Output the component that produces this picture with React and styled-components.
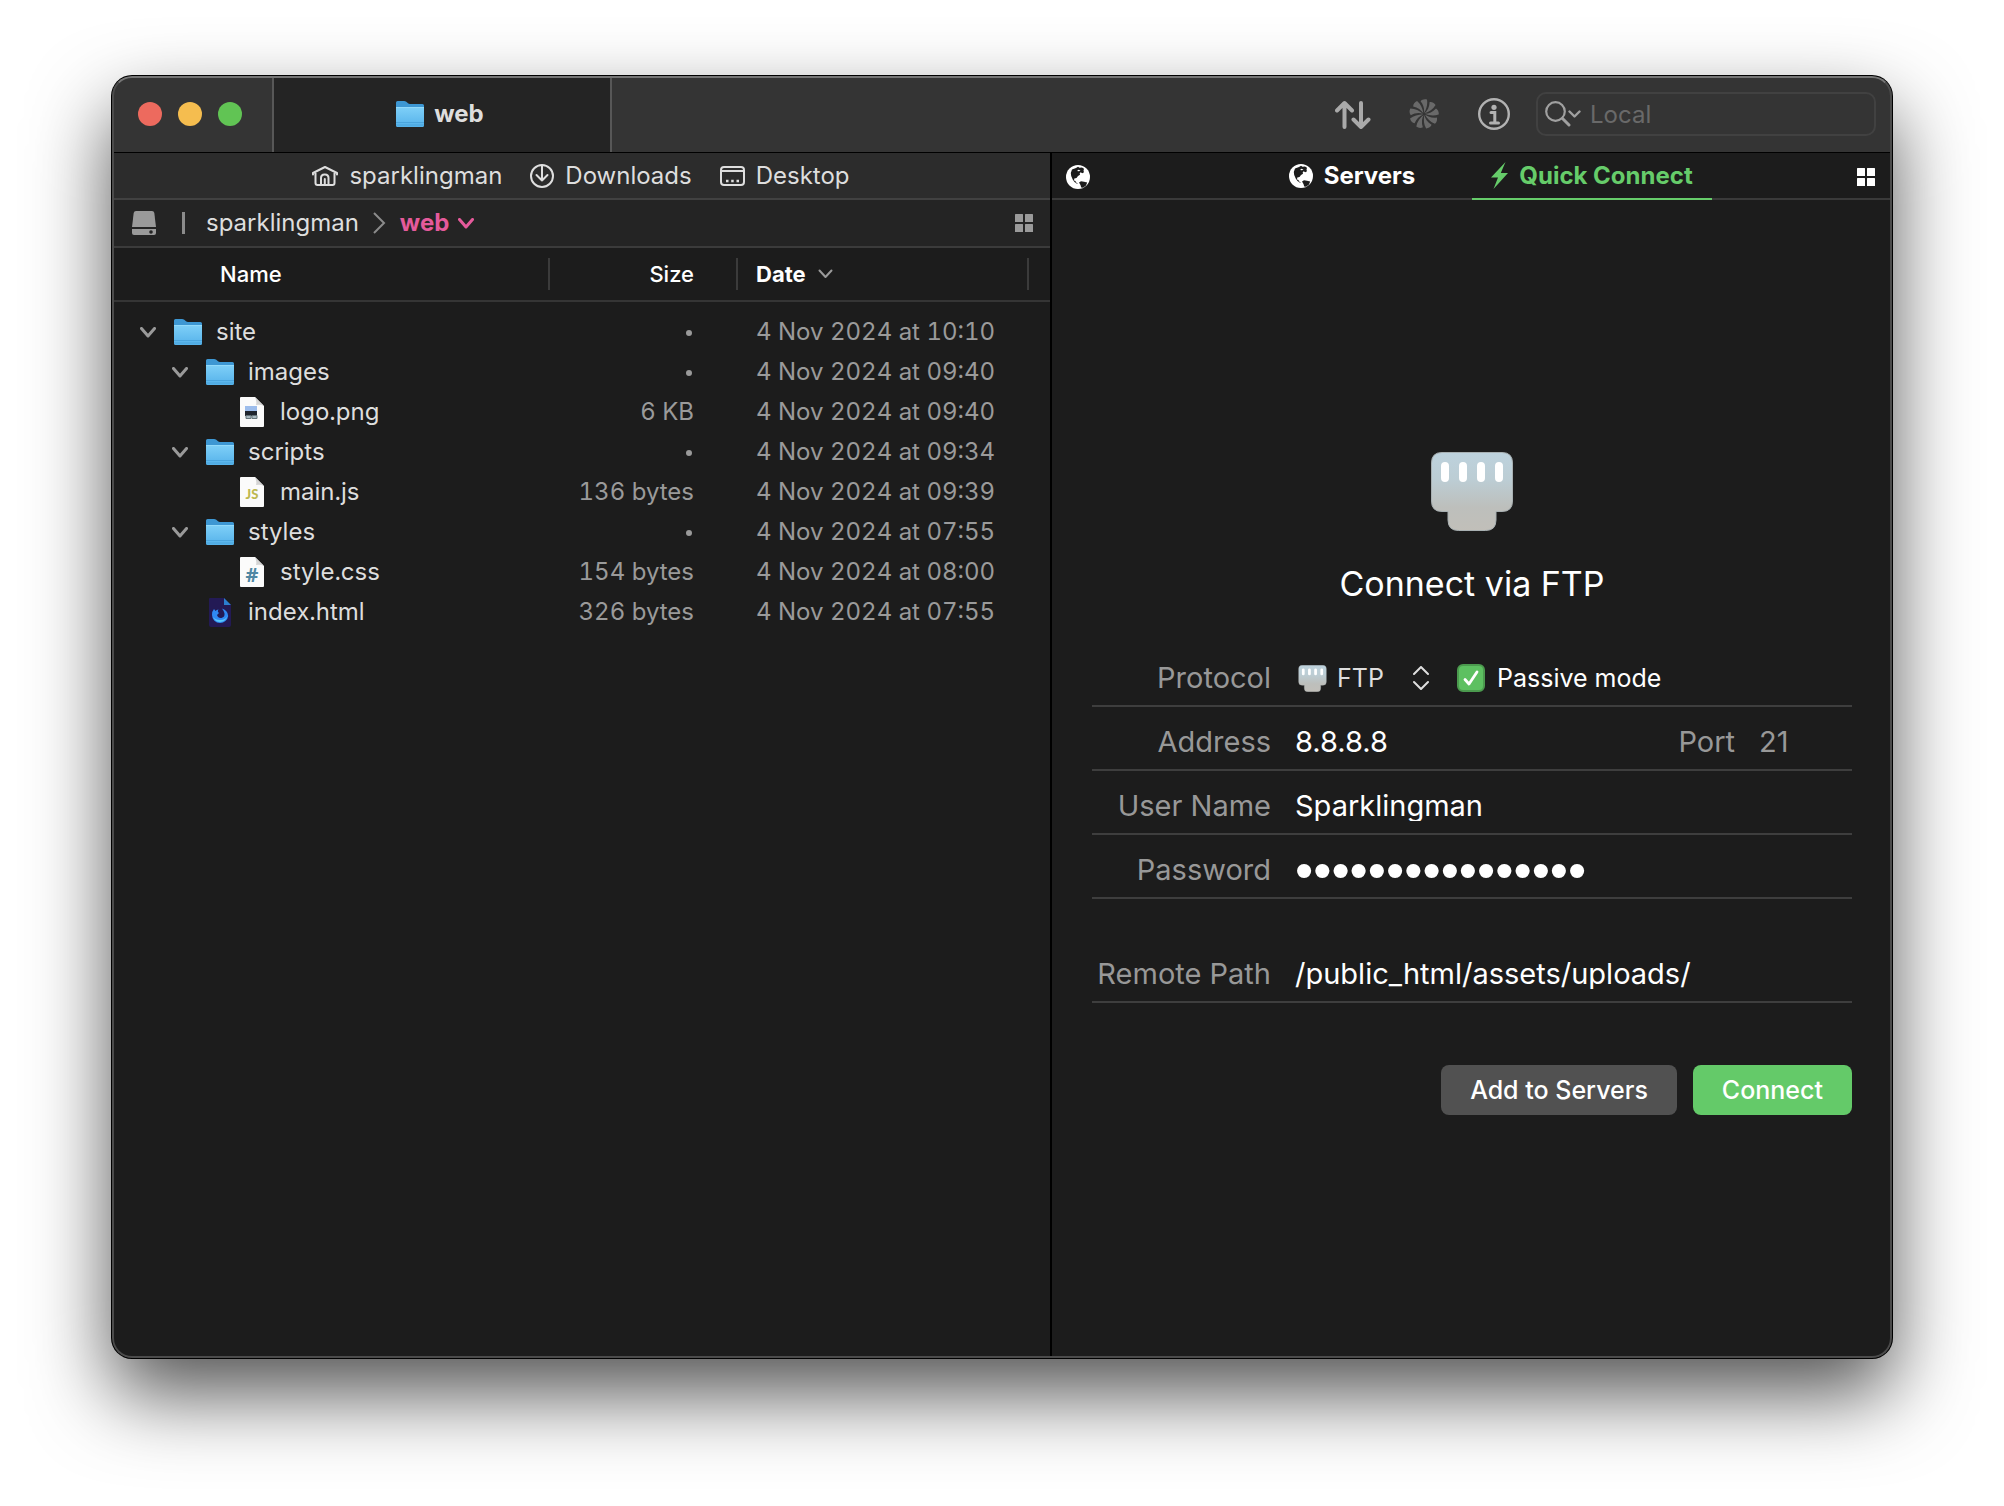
import { useState } from 'react'
import styled, { createGlobalStyle } from 'styled-components'

const GlobalStyle = createGlobalStyle`
    * {
        box-sizing: border-box;
    }
    body {
        margin: 0;
        background: #ffffff;
        font-family: Inter, "Liberation Sans", sans-serif;
        font-size: 24px;
        line-height: 30px;
        color: #dedede;
    }
    button, input, select {
        font: inherit;
        color: inherit;
        border: 0;
        padding: 0;
        margin: 0;
        background: none;
        outline: none;
    }
    svg {
        display: block;
        flex: none;
    }
`

const Page = styled.div`
    min-height: 100vh;
    display: flex;
    padding: 76px 112px 148px;
`

const Window = styled.main`
    position: relative;
    flex: 1;
    min-width: 0;
    display: flex;
    flex-direction: column;
    background: #1c1c1c;
    border-radius: 20px;
    overflow: hidden;
    box-shadow: 0 0 0 1px #000000, 0 36px 80px rgba(0, 0, 0, 0.68);

    &::after {
        content: "";
        position: absolute;
        inset: 0;
        border: 2px solid #4b4b4b;
        border-top-color: #757575;
        border-radius: 20px;
        pointer-events: none;
    }
`

/* title bar */

const TitleBar = styled.header`
    display: flex;
    height: 77px;
    background: #343434;
    border-bottom: 1px solid #000000;
`

const Lights = styled.div`
    display: flex;
    align-items: center;
    gap: 16px;
    width: 160px;
    padding-left: 26px;
`

const Light = styled.button`
    width: 24px;
    height: 24px;
    border-radius: 50%;
    background: ${props => props.$color};
`

const WindowTab = styled.button`
    display: flex;
    align-items: center;
    justify-content: center;
    gap: 10px;
    width: 340px;
    padding-right: 4px;
    background: #242424;
    border: solid #575757;
    border-width: 0 2px;
    font-weight: 700;
`

const Tools = styled.div`
    flex: 1;
    display: flex;
    align-items: center;
    justify-content: flex-end;
    gap: 26px;
    padding-right: 16px;
`

const ToolButton = styled.button`
    display: flex;
    justify-content: center;
    width: 44px;
`

const Search = styled.label`
    display: flex;
    align-items: center;
    gap: 9px;
    width: 340px;
    height: 44px;
    margin-left: -6px;
    padding-left: 7px;
    border: 2px solid #414141;
    border-radius: 10px;
`

const SearchInput = styled.input`
    flex: 1;
    min-width: 0;
    padding-top: 2px;

    &::placeholder {
        color: #696969;
        opacity: 1;
    }
`

/* panes */

const Panes = styled.div`
    flex: 1;
    display: grid;
    grid-template-columns: 938fr 842fr;
`

const LocalPane = styled.section`
    min-width: 0;
`

const RemotePane = styled.section`
    min-width: 0;
    border-left: 2px solid #000000;
`

const Favourites = styled.nav`
    display: flex;
    align-items: center;
    justify-content: center;
    gap: 28px;
    height: 47px;
    background: #2c2c2c;
    border-bottom: 2px solid #414141;
`

const Favourite = styled.a`
    display: flex;
    align-items: center;
    gap: 11px;
    color: inherit;
    text-decoration: none;
`

const PathBar = styled.nav`
    display: flex;
    align-items: center;
    gap: 14px;
    height: 48px;
    padding: 0 17px 0 20px;
    background: #242424;
    border-bottom: 2px solid #3b3b3b;
`

const PathLink = styled.a`
    color: inherit;
    text-decoration: none;
`

const PathDivider = styled.span`
    width: 3px;
    height: 22px;
    margin: 0 7px 0 12px;
    background: #8b8b8b;
`

const CurrentFolder = styled.button`
    display: flex;
    align-items: center;
    gap: 9px;
    margin-right: auto;
    color: #e55a9b;
    font-weight: 700;
`

/* file list */

const FileTable = styled.table`
    width: 100%;
    table-layout: fixed;
    border-collapse: collapse;
`

const Column = styled.col`
    width: ${props => props.$width || 'auto'};
`

const HeadCell = styled.th`
    padding: 0;
    border-bottom: 2px solid #353535;
    font-size: 22px;
    font-weight: ${props => (props.$sorted ? 700 : 500)};
    color: #ffffff;
`

const HeadLabel = styled.div`
    display: flex;
    align-items: center;
    justify-content: ${props => (props.$end ? 'flex-end' : 'flex-start')};
    gap: 12px;
    height: 32px;
    margin: 10px 0;
    padding: 0 ${props => (props.$end ? '42px' : '0')} 0 ${props => props.$left || '0'};
    border-right: 2px solid #3b3b3b;
`

const Cell = styled.td`
    height: 40px;
    padding: 0 ${props => (props.$end ? '44px' : '0')} 0 ${props => props.$left || '0'};
    text-align: ${props => (props.$end ? 'right' : 'left')};
    color: #9a9a9a;
    font-variant-numeric: tabular-nums;
`

const Spacer = styled.tr`
    height: 11px;
`

const FileName = styled.div`
    display: flex;
    align-items: center;
    height: 40px;
    padding-left: ${props => 28 + props.$level * 32}px;
    color: #dedede;
`

const Disclosure = styled.button`
    width: 16px;
    margin-right: 16px;
`

const IconSlot = styled.span`
    display: flex;
    justify-content: center;
    width: 32px;
    margin-right: 12px;
`

const Dot = styled.span`
    display: inline-block;
    width: 6px;
    height: 6px;
    margin-right: 2px;
    border-radius: 50%;
    background: #9a9a9a;
    vertical-align: middle;
`

/* connection form */

const TabBar = styled.nav`
    display: grid;
    grid-template-columns: 1fr 240px 240px 1fr;
    height: 47px;
    border-bottom: 2px solid #3a3a3a;
`

const PaneButton = styled.button`
    justify-self: ${props => (props.$end ? 'end' : 'start')};
    padding: 0 17px 0 14px;
`

const ServerTab = styled.button`
    display: flex;
    align-items: center;
    justify-content: center;
    gap: 11px;
    height: 47px;
    font-weight: 700;
    color: ${props => (props.$active ? '#66cc6a' : '#ffffff')};
    border-bottom: 2px solid ${props => (props.$active ? '#66cc6a' : 'transparent')};
`

const Form = styled.form`
    padding: 252px 40px 0;
`

const Hero = styled.div`
    display: flex;
    flex-direction: column;
    align-items: center;
    gap: 33px;
    margin-bottom: 39px;
`

const Title = styled.h1`
    margin: 0;
    font-size: 34px;
    line-height: 40px;
    font-weight: 400;
    color: #ffffff;
`

const Field = styled.div`
    display: flex;
    align-items: center;
    height: 64px;
    padding-top: 8px;
    margin-top: ${props => (props.$apart ? '40px' : '0')};
    border-bottom: 2px solid #3e3e3e;
    font-size: 29px;
    color: #ffffff;
`

const Label = styled.label`
    width: 179px;
    margin-right: 24px;
    text-align: right;
    white-space: nowrap;
    color: #989898;
`

const PortLabel = styled.label`
    margin-right: 24px;
    color: #989898;
`

const TextInput = styled.input`
    flex: 1;
    min-width: 0;
`

const PasswordInput = styled(TextInput)`
    height: 30px;
    font-family: "Liberation Sans", Arial, sans-serif;
    font-size: 52px;
    line-height: 30px;
`

const PortInput = styled.input`
    width: 93px;

    &::placeholder {
        color: #989898;
        opacity: 1;
    }
`

const Protocol = styled.div`
    display: flex;
    align-items: center;
    gap: 10px;
    margin: 0 28px 0 3px;
    font-size: 25px;
    color: #dedede;
`

const Select = styled.select`
    appearance: none;
    width: 66px;
`

const Check = styled.label`
    display: flex;
    align-items: center;
    gap: 12px;
    font-size: 25px;
`

const CheckMark = styled.span`
    display: grid;
    place-items: center;

    > * {
        grid-area: 1 / 1;
    }
    svg {
        pointer-events: none;
    }
`

const CheckBox = styled.input`
    appearance: none;
    width: 28px;
    height: 28px;
    border: 2px solid #4b9a4e;
    border-radius: 6px;
    background: ${props => (props.checked ? '#5dc061' : '#3a3a3a')};
`

const Actions = styled.div`
    display: flex;
    justify-content: flex-end;
    gap: 16px;
    margin-top: 62px;
`

const ActionButton = styled.button`
    height: 50px;
    padding: 0 29px;
    border-radius: 8px;
    font-size: 25px;
    font-weight: 500;
    color: #ffffff;
    background: ${props => (props.$primary ? '#64ca69' : '#515151')};
`

/* icons */

function Folder() {
    return (
        <svg width="28" height="28" viewBox="0 0 28 28">
            <defs>
                <linearGradient id="folder" x1="0" y1="0" x2="0" y2="1">
                    <stop offset="0" stopColor="#7fd0f8" />
                    <stop offset="1" stopColor="#55b2ea" />
                </linearGradient>
            </defs>
            <path d="M0 2.500Q0 1 1.500 1H8q1.300 0 2.300.8L12 3.200q.8.700 2 .7h12.500Q28 3.900 28 5.400V12H0z" fill="#3d97d3" />
            <path d="M0 7h28v18.500q0 1.500-1.500 1.500h-25Q0 27 0 25.500z" fill="url(#folder)" />
            <path d="M0 7.500h28" stroke="#92dafb" />
            <path d="M0 22.500h28M0 25h28" stroke="#4aa4dc" strokeWidth="1" />
        </svg>
    )
}

function Chevron({ width = 16, height = 11, stroke = 3, color = '#9a9a9a' }) {
    return (
        <svg width={width} height={height} viewBox={`0 0 ${width} ${height}`}>
            <path d={`M1.500 1.500 ${width / 2} ${height - 2}l${width / 2 - 1.5}-${height - 3.5}`} fill="none" stroke={color} strokeWidth={stroke} strokeLinecap="round" strokeLinejoin="round" />
        </svg>
    )
}

function Grid({ color }) {
    return (
        <svg width="18" height="18" viewBox="0 0 18 18" fill={color}>
            <rect width="8" height="8" rx=".5" />
            <rect x="10" width="8" height="8" rx=".5" />
            <rect y="10" width="8" height="8" rx=".5" />
            <rect x="10" y="10" width="8" height="8" rx=".5" />
        </svg>
    )
}

function Globe() {
    return (
        <svg width="24" height="24" viewBox="0 0 24 24">
            <circle cx="12" cy="12" r="12" fill="#ffffff" />
            <path d="M6 4.500 10 3l2-1.200 1.500 1 2.500-.3 2 1.200-.5 2 .5 1.600-1.800 1-1.500-1-1 1 .3 1.500-2 1.200-1.500 2-2.200.6-.3 2 1.500.3.5 1.500 1.800.8-.8.6L8.500 17l-1.800-2.500L5.200 11l-.4-3z" fill="#1c1c1c" />
            <path d="m13 17.500 2-1.300 3 .5 3.200.8-1.200 3-3 2.300-1.800-.3-.7-2.500z" fill="#1c1c1c" />
            <path d="m11 6 1.500-1.200 2 .6-1.500.8z" fill="#ffffff" />
        </svg>
    )
}

function Plug({ width, height }) {
    return (
        <svg width={width} height={height} viewBox="0 0 82 79">
            <defs>
                <linearGradient id="plug" x1="0" y1="0" x2="0" y2="1">
                    <stop offset="0" stopColor="#bdd2dd" />
                    <stop offset=".35" stopColor="#bccdd4" />
                    <stop offset=".7" stopColor="#bdbfbc" />
                    <stop offset="1" stopColor="#c1bfb9" />
                </linearGradient>
            </defs>
            <path d="M11 .5h60q10.500 0 10.500 10.500v38q0 10.500-10.500 10.500h-6V68q0 10.500-10.500 10.500h-27Q17 78.500 17 68v-8.500h-6Q.5 59.500.5 49V11Q.5.5 11 .5z" fill="url(#plug)" stroke="#a8b0b2" />
            <path d="M14 14v12M32 14v12M50 14v12M68 14v12" stroke="#ffffff" strokeWidth="8" strokeLinecap="round" />
        </svg>
    )
}

function Pinwheel() {
    const angles = [0, 40, 80, 120, 160, 200, 240, 280, 320]
    return (
        <svg width="30" height="30" viewBox="-15 -15 30 30" fill="#696969">
            {angles.map(angle => (
                <path key={angle} transform={`rotate(${angle})`} d="M0-1C.6-5-.5-9-3.400-12.800-2-14.500.5-15.200 3-14.400 3.800-9.500 2.400-5 0-1z" />
            ))}
        </svg>
    )
}

function DocIcon({ kind }) {
    if (kind === 'firefox') {
        return (
            <svg width="22" height="29" viewBox="0 0 22 29">
                <path d="M1 0h14l7 7v20q0 2-2 2H2q-2 0-2-2V1q0-1 1-1z" fill="#231a55" />
                <path d="M15 0v7h7z" fill="#2b7fd0" />
                <path d="M11 25a8 8 0 0 1-8-8q0-4 2-6l1.500 2q1-1.500 3-1.500-1.500 2 .5 3.500L8 17q1 3.500 4.500 3 3.500-1 3-4.500-.5-2.500-2.500-5 6 2 6.200 7.500A8.200 8 0 0 1 11 25z" fill="#2f8af5" />
                <path d="M4 19q2 5 7 5 6-.5 7.500-6-2 4-7 4-5 .3-7.500-3z" fill="#58c8fb" />
            </svg>
        )
    }
    return (
        <svg width="24" height="30" viewBox="0 0 24 30">
            <path d="M1 0h14l9 9v20q0 1-1 1H1q-1 0-1-1V1q0-1 1-1z" fill="#fbfbfb" />
            <path d="M15 0q2 5 1 8 4-1 8 1z" fill="#d4d4d4" />
            {kind === 'image' && (
                <g>
                    <path d="M5 9h12v7H5z" fill="#9dbdec" />
                    <path d="M5 14h12v5H5z" fill="#20252e" />
                    <path d="M6 18.500h5v3H6zM12 18.500h5v3h-5z" fill="#aab9c1" stroke="#65747a" />
                </g>
            )}
            {kind === 'js' && <text x="12" y="22" textAnchor="middle" fontFamily="Lato, sans-serif" fontSize="13" fontWeight="900" fill="#bdb84f">JS</text>}
            {kind === 'css' && <text x="12" y="25" textAnchor="middle" fontFamily="Open Sans, sans-serif" fontSize="20" fontWeight="700" fill="#4f87a3">#</text>}
        </svg>
    )
}

function HomeIcon() {
    return (
        <svg width="26" height="20" viewBox="0 0 26 20" fill="none" stroke="#dedede" strokeWidth="2" strokeLinecap="round" strokeLinejoin="round">
            <path d="M1 8.500V7L13 1l12 6v1.500M3.500 7v10q0 2 2 2h15q2 0 2-2V7" />
            <path d="M9 19v-7q0-3.500 3.500-3.500H13M13 8.500q3.500 0 3.500 3.500v7M12.800 19v-6" />
        </svg>
    )
}

function DownloadIcon() {
    return (
        <svg width="24" height="24" viewBox="0 0 24 24" fill="none" stroke="#dedede" strokeWidth="2" strokeLinecap="round" strokeLinejoin="round">
            <circle cx="12" cy="12" r="11" />
            <path d="M12 2v14.500M6.500 11 12 16.500l5.500-5.500" />
        </svg>
    )
}

function DesktopIcon() {
    return (
        <svg width="25" height="20" viewBox="0 0 25 20" fill="none" stroke="#dedede" strokeWidth="2">
            <rect x="1" y="1" width="23" height="18" rx="3" />
            <path d="M1 5h23" />
            <path d="M6 15h2.500M11.200 15h2.500M16.500 15H19" strokeWidth="2.500" />
        </svg>
    )
}

function DriveIcon() {
    return (
        <svg width="24" height="24" viewBox="0 0 24 24" fill="#9a9a9a">
            <path d="M4 0h16q2 0 2.300 2L24 16H0L1.700 2Q2 0 4 0z" />
            <path d="M0 18h24v4q0 2-2 2H2q-2 0-2-2z" />
            <circle cx="19" cy="21" r="1.800" fill="#242424" />
        </svg>
    )
}

const files = [
    { name: 'site', level: 0, folder: true, date: '4 Nov 2024 at 10:10' },
    { name: 'images', level: 1, folder: true, date: '4 Nov 2024 at 09:40' },
    { name: 'logo.png', level: 2, kind: 'image', size: '6 KB', date: '4 Nov 2024 at 09:40' },
    { name: 'scripts', level: 1, folder: true, date: '4 Nov 2024 at 09:34' },
    { name: 'main.js', level: 2, kind: 'js', size: '136 bytes', date: '4 Nov 2024 at 09:39' },
    { name: 'styles', level: 1, folder: true, date: '4 Nov 2024 at 07:55' },
    { name: 'style.css', level: 2, kind: 'css', size: '154 bytes', date: '4 Nov 2024 at 08:00' },
    { name: 'index.html', level: 1, kind: 'firefox', size: '326 bytes', date: '4 Nov 2024 at 07:55' },
]

function Toolbar() {
    return (
        <TitleBar>
            <Lights>
                <Light $color="#ed6a5e" aria-label="Close" />
                <Light $color="#f5bd4f" aria-label="Minimize" />
                <Light $color="#61c454" aria-label="Zoom" />
            </Lights>
            <WindowTab><Folder />web</WindowTab>
            <Tools>
                <ToolButton aria-label="Transfers">
                    <svg width="38" height="30" viewBox="0 0 38 30" fill="none" stroke="#a9a9a9" strokeWidth="4" strokeLinecap="round" strokeLinejoin="round">
                        <path d="M9.500 28V4M2 11.500 9.500 4l7.500 7.500M26 4v24M18.500 20.500 26 28l7.500-7.500" />
                    </svg>
                </ToolButton>
                <ToolButton aria-label="Activity"><Pinwheel /></ToolButton>
                <ToolButton aria-label="Info">
                    <svg width="32" height="32" viewBox="0 0 32 32" fill="none" stroke="#b2b2b2">
                        <circle cx="16" cy="16" r="14.800" strokeWidth="2.400" />
                        <circle cx="16" cy="9.300" r="2.600" fill="#b2b2b2" stroke="none" />
                        <path d="M13 14.500h3.800v10M12.500 25h8" strokeWidth="3" strokeLinecap="round" />
                    </svg>
                </ToolButton>
                <Search>
                    <svg width="36" height="26" viewBox="0 0 36 26" fill="none" stroke="#a0a0a0" strokeLinecap="round" strokeLinejoin="round">
                        <circle cx="10.500" cy="10.500" r="9.300" strokeWidth="2.200" />
                        <path d="m17.500 17.500 6.500 6.500" strokeWidth="3" />
                        <path d="m24.500 10.500 5 5 5-5" strokeWidth="2.400" />
                    </svg>
                    <SearchInput type="search" placeholder="Local" aria-label="Search local files" />
                </Search>
            </Tools>
        </TitleBar>
    )
}

function FileList() {
    return (
        <FileTable>
            <colgroup>
                <Column />
                <Column $width="188px" />
                <Column $width="291px" />
                <Column $width="21px" />
            </colgroup>
            <thead>
                <tr>
                    <HeadCell><HeadLabel $left="108px">Name</HeadLabel></HeadCell>
                    <HeadCell><HeadLabel $end>Size</HeadLabel></HeadCell>
                    <HeadCell $sorted>
                        <HeadLabel $left="18px">Date<Chevron width={15} height={10} stroke={2} /></HeadLabel>
                    </HeadCell>
                    <HeadCell />
                </tr>
            </thead>
            <tbody>
                <Spacer />
                {files.map(file => (
                    <tr key={file.name}>
                        <Cell>
                            <FileName $level={file.level}>
                                {file.folder ? <Disclosure aria-label="Collapse"><Chevron /></Disclosure> : <Disclosure as="span" />}
                                <IconSlot>{file.folder ? <Folder /> : <DocIcon kind={file.kind} />}</IconSlot>
                                {file.name}
                            </FileName>
                        </Cell>
                        <Cell $end>{file.size || <Dot />}</Cell>
                        <Cell $left="18px">{file.date}</Cell>
                        <Cell />
                    </tr>
                ))}
            </tbody>
        </FileTable>
    )
}

function QuickConnect() {
    const [address, setAddress] = useState('8.8.8.8')
    const [user, setUser] = useState('Sparklingman')
    const [password, setPassword] = useState('sixteencharacter')
    const [path, setPath] = useState('/public_html/assets/uploads/')
    const [passive, setPassive] = useState(true)

    return (
        <Form onSubmit={e => e.preventDefault()}>
            <Hero>
                <Plug width={82} height={79} />
                <Title>Connect via FTP</Title>
            </Hero>
            <Field>
                <Label htmlFor="protocol">Protocol</Label>
                <Protocol>
                    <Plug width={29} height={27} />
                    <Select id="protocol"><option>FTP</option></Select>
                    <svg width="16" height="24" viewBox="0 0 16 24" fill="none" stroke="#dedede" strokeWidth="2" strokeLinecap="round" strokeLinejoin="round">
                        <path d="m1 8 7-7 7 7M1 16l7 7 7-7" />
                    </svg>
                </Protocol>
                <Check>
                    <CheckMark>
                        <CheckBox type="checkbox" checked={passive} onChange={e => setPassive(e.target.checked)} />
                        {passive && (
                            <svg width="16" height="16" viewBox="0 0 16 16" fill="none" stroke="#ffffff" strokeWidth="2.800" strokeLinecap="round" strokeLinejoin="round">
                                <path d="m2 9.500 4 4.500L14 2" />
                            </svg>
                        )}
                    </CheckMark>
                    Passive mode
                </Check>
            </Field>
            <Field>
                <Label htmlFor="address">Address</Label>
                <TextInput id="address" value={address} onChange={e => setAddress(e.target.value)} />
                <PortLabel htmlFor="port">Port</PortLabel>
                <PortInput id="port" placeholder="21" />
            </Field>
            <Field>
                <Label htmlFor="user">User Name</Label>
                <TextInput id="user" value={user} onChange={e => setUser(e.target.value)} />
            </Field>
            <Field>
                <Label htmlFor="password">Password</Label>
                <PasswordInput id="password" type="password" value={password} onChange={e => setPassword(e.target.value)} />
            </Field>
            <Field $apart>
                <Label htmlFor="path">Remote Path</Label>
                <TextInput id="path" value={path} onChange={e => setPath(e.target.value)} />
            </Field>
            <Actions>
                <ActionButton type="button">Add to Servers</ActionButton>
                <ActionButton type="submit" $primary>Connect</ActionButton>
            </Actions>
        </Form>
    )
}

function App() {
    return (
        <Page>
            <GlobalStyle />
            <Window>
                <Toolbar />
                <Panes>
                    <LocalPane>
                        <Favourites>
                            <Favourite href="#home"><HomeIcon />sparklingman</Favourite>
                            <Favourite href="#downloads"><DownloadIcon />Downloads</Favourite>
                            <Favourite href="#desktop"><DesktopIcon />Desktop</Favourite>
                        </Favourites>
                        <PathBar>
                            <DriveIcon />
                            <PathDivider />
                            <PathLink href="#home">sparklingman</PathLink>
                            <svg width="13" height="22" viewBox="0 0 13 22" fill="none" stroke="#8b8b8b" strokeWidth="2">
                                <path d="m1 1 10 10L1 21" />
                            </svg>
                            <CurrentFolder>web<Chevron color="#e55a9b" /></CurrentFolder>
                            <button aria-label="View options"><Grid color="#9a9a9a" /></button>
                        </PathBar>
                        <FileList />
                    </LocalPane>
                    <RemotePane>
                        <TabBar>
                            <PaneButton aria-label="Location"><Globe /></PaneButton>
                            <ServerTab><Globe />Servers</ServerTab>
                            <ServerTab $active>
                                <svg width="17" height="27" viewBox="0 0 17 27" fill="#66cc6a">
                                    <path d="M14.500 0 0 15.500h7L2.500 27 17 11H9.800z" />
                                </svg>
                                Quick Connect
                            </ServerTab>
                            <PaneButton $end aria-label="View options"><Grid color="#ffffff" /></PaneButton>
                        </TabBar>
                        <QuickConnect />
                    </RemotePane>
                </Panes>
            </Window>
        </Page>
    )
}

export default App
